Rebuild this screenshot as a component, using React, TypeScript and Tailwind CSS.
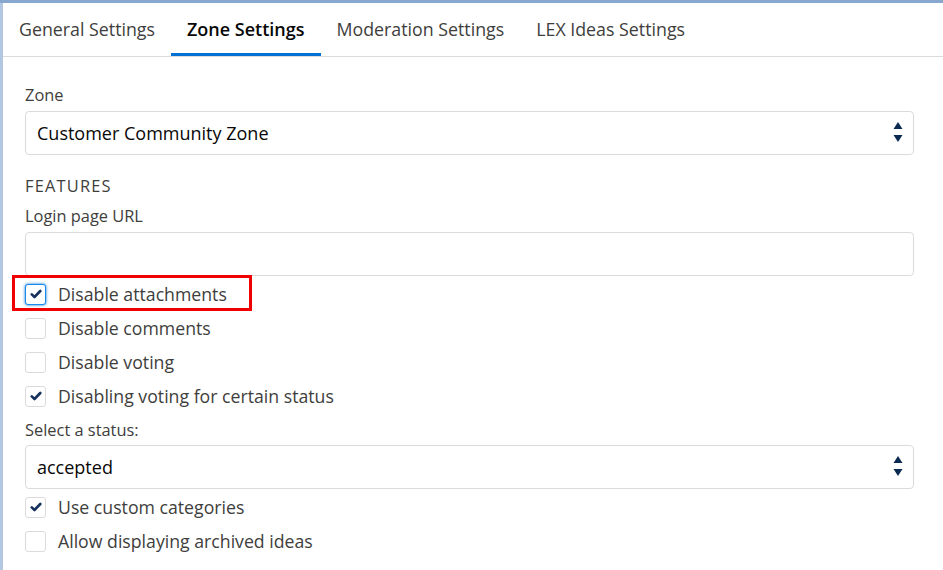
import React from "react";

const font = { fontFamily: '"Open Sans", "Liberation Sans", sans-serif' };

function Check() {
  return (
    <svg width="12" height="10" viewBox="0 0 12 10">
      <path d="M1.8 5.4 L4.5 8 L10.3 2" fill="none" stroke="#16325c" strokeWidth="2.6" strokeLinecap="round" strokeLinejoin="round" />
    </svg>
  );
}

function Checkbox({ checked, focus, label }: { checked?: boolean; focus?: boolean; label: string }) {
  return (
    <div className="flex h-[34px] items-center">
      <div
        className={
          "flex h-[21px] w-[21px] items-center justify-center rounded-[3px] border bg-white " +
          (focus ? "border-[#1589ee] shadow-[0_0_3px_#0070d2]" : "border-[#dddbda]")
        }
      >
        {checked && <Check />}
      </div>
      <span className="ml-[12px] text-[17.7px] text-[#3e3e3c]">{label}</span>
    </div>
  );
}

function Arrows() {
  return (
    <svg width="10" height="26" viewBox="0 0 10 26">
      <path d="M5 2 L9.5 9 L0.5 9 Z" fill="#0b2a52" />
      <path d="M0.5 15 L9.5 15 L5 22 Z" fill="#0b2a52" />
    </svg>
  );
}

function Select({ value }: { value: string }) {
  return (
    <div className="flex h-[44px] items-center justify-between rounded-[4px] border border-[#dddbda] bg-white pl-[11px] pr-[10px]">
      <span className="text-[18px] text-[#080707]">{value}</span>
      <Arrows />
    </div>
  );
}

export default function App() {
  const tabs = ["General Settings", "Zone Settings", "Moderation Settings", "LEX Ideas Settings"];
  return (
    <div className="min-h-[570px] w-[943px] border-t-[3px] border-[#88a7cf] bg-[#b3c7e2] pl-[3px]" style={font}>
      <div className="min-h-[567px] bg-white">
        <div className="flex h-[54px] border-b border-[#dddbda]">
          {tabs.map((t, i) => (
            <div
              key={t}
              className={
                "flex items-center px-[16px] " +
                (i === 1
                  ? "border-b-[3px] border-[#0070d2] pt-[3px] text-[18px] font-semibold text-[#080707]"
                  : "text-[17.8px] text-[#3e3e3c]")
              }
            >
              {t}
            </div>
          ))}
        </div>
        <div className="pl-[22px] pr-[29px] pt-[28px]">
          <div className="text-[16.4px] leading-[20px] text-[#3e3e3c]">Zone</div>
          <div className="mt-[6px]">
            <Select value="Customer Community Zone" />
          </div>
          <div className="mt-[21px] text-[16.4px] leading-[20px] tracking-[1.2px] text-[#3e3e3c]">FEATURES</div>
          <div className="mt-[10px] text-[16.4px] leading-[20px] text-[#3e3e3c]">Login page URL</div>
          <div className="mt-[6px] h-[44px] rounded-[4px] border border-[#dddbda] bg-white"></div>
          <div className="relative mt-[1px]">
            <div className="pointer-events-none absolute left-[-13px] top-[-2px] h-[36px] w-[240px] border-[3px] border-[#f00000]"></div>
            <Checkbox checked focus label="Disable attachments" />
          </div>
          <Checkbox label="Disable comments" />
          <Checkbox label="Disable voting" />
          <Checkbox checked label="Disabling voting for certain status" />
          <div className="mt-[7px] text-[16.4px] leading-[20px] text-[#3e3e3c]">Select a status:</div>
          <div className="mt-[5px]">
            <Select value="accepted" />
          </div>
          <div className="mt-[1px]">
            <Checkbox checked label="Use custom categories" />
            <Checkbox label="Allow displaying archived ideas" />
          </div>
        </div>
      </div>
    </div>
  );
}
